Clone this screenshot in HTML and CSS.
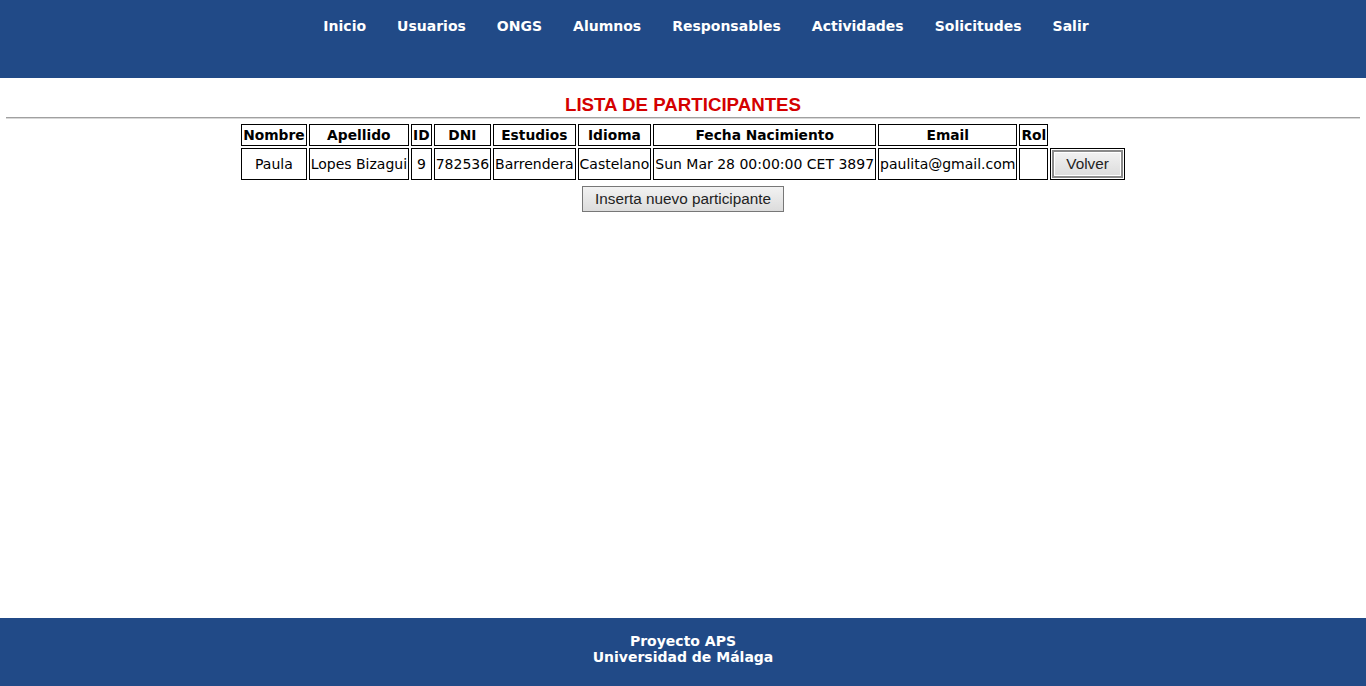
FILE: index.html
```html
<!DOCTYPE html>
<html lang="es">
<head>
<meta charset="utf-8">
<title>Lista de participantes</title>
<link rel="stylesheet" href="styles.css">
</head>
<body>
<header class="top">
  <nav class="menu">
    <a href="#">Inicio</a>
    <a href="#">Usuarios</a>
    <a href="#">ONGS</a>
    <a href="#">Alumnos</a>
    <a href="#">Responsables</a>
    <a href="#">Actividades</a>
    <a href="#">Solicitudes</a>
    <a href="#">Salir</a>
  </nav>
</header>
<main class="content">
  <h1 class="title">LISTA DE PARTICIPANTES</h1>
  <div class="rule"></div>
  <table class="grid">
    <tr>
      <th>Nombre</th><th>Apellido</th><th>ID</th><th>DNI</th><th>Estudios</th><th>Idioma</th><th>Fecha Nacimiento</th><th>Email</th><th>Rol</th>
    </tr>
    <tr>
      <td>Paula</td><td>Lopes Bizagui</td><td>9</td><td>782536</td><td>Barrendera</td><td>Castelano</td><td>Sun Mar 28 00:00:00 CET 3897</td><td>paulita@gmail.com</td><td></td>
      <td class="btn-cell"><button class="btn volver">Volver</button></td>
    </tr>
  </table>
  <div class="actions"><button class="btn">Inserta nuevo participante</button></div>
</main>
<footer class="bottom">
  <div>Proyecto APS</div>
  <div>Universidad de Málaga</div>
</footer>
</body>
</html>
```

FILE: styles.css
```css
html, body {
  margin: 0;
  padding: 0;
}
body {
  min-height: 100vh;
  display: flex;
  flex-direction: column;
  font-family: "DejaVu Sans", Verdana, sans-serif;
  background: #fff;
  color: #000;
}
.top {
  background: #214a87;
  height: 78px;
}
.menu {
  display: flex;
  justify-content: center;
  gap: 31px;
  padding: 17px 0 0 46px;
}
.menu a {
  color: #fff;
  text-decoration: none;
  font-weight: bold;
  font-size: 14px;
  line-height: 18px;
}
.content {
  flex: 1;
  display: flex;
  flex-direction: column;
  align-items: center;
}
.title {
  margin: 16px 0 0;
  font-family: "Liberation Sans", Arial, sans-serif;
  font-size: 18.7px;
  line-height: 21px;
  font-weight: bold;
  color: #d40000;
}
.rule {
  align-self: stretch;
  margin: 2px 6px 0;
  height: 0;
  border-top: 1px solid #a0a0a0;
  border-bottom: 1px solid #d8d8d8;
}
.grid {
  margin-top: 3px;
  border-collapse: separate;
  border-spacing: 2px;
  font-size: 14px;
}
.grid th, .grid td {
  border: 1px solid #000;
  padding: 1px;
  text-align: center;
  line-height: 18px;
}
.grid th {
  font-weight: bold;
  font-size: 13.8px;
}
.grid td.btn-cell {
  padding: 1px;
}
.btn {
  font-family: "Liberation Sans", Arial, sans-serif;
  font-size: 15.3px;
  color: #222;
  background: linear-gradient(#f2f2f2, #dcdcdc);
  border: 1px solid #777;
  padding: 3px 12px;
  line-height: 18px;
}
.volver {
  border: 2px solid #8a8a8a;
  box-shadow: inset 0 0 0 1px #fff;
  padding: 3px 12px;
}
.actions {
  margin-top: 4px;
}
.bottom {
  background: #214a87;
  color: #fff;
  height: 68px;
  box-sizing: border-box;
  padding-top: 15px;
  text-align: center;
  font-weight: bold;
  font-size: 14px;
  line-height: 16px;
}
```
